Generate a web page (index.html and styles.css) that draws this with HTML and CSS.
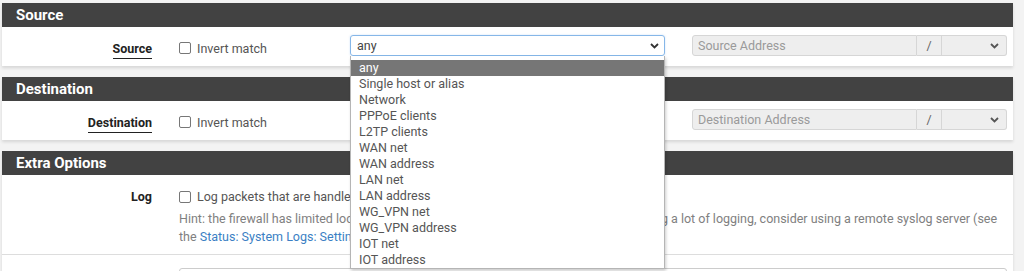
FILE: index.html
```html
<!DOCTYPE html>
<html lang="en">
<head>
    <meta charset="UTF-8">
    <title>Edit Firewall Rule</title>
    <link rel="stylesheet" href="styles.css">
</head>
<body>
    <div class="main">
        <div class="panel">
            <div class="panelHead">Source</div>
            <div class="panelBody">
                <div class="row">
                    <span class="label"><span class="required">Source</span></span>
                    <label class="check"><span class="box"></span>Invert match</label>
                    <div class="selectWrap">
                        <div class="select focus">
                            <span>any</span>
                            <svg class="chev" width="9" height="6" viewBox="0 0 9 6"><path d="M1 1 L4.5 4.5 L8 1" fill="none" stroke="#333" stroke-width="1.8"/></svg>
                        </div>
                        <ul class="dropList">
                            <li class="active">any</li>
                            <li>Single host or alias</li>
                            <li>Network</li>
                            <li>PPPoE clients</li>
                            <li>L2TP clients</li>
                            <li>WAN net</li>
                            <li>WAN address</li>
                            <li>LAN net</li>
                            <li>LAN address</li>
                            <li>WG_VPN net</li>
                            <li>WG_VPN address</li>
                            <li>IOT net</li>
                            <li>IOT address</li>
                        </ul>
                    </div>
                    <div class="addrGroup">
                        <span class="addr">Source Address</span>
                        <span class="slash">/</span>
                        <span class="mask">
                            <svg class="chev" width="9" height="6" viewBox="0 0 9 6"><path d="M1 1 L4.5 4.5 L8 1" fill="none" stroke="#555" stroke-width="1.8"/></svg>
                        </span>
                    </div>
                </div>
            </div>
        </div>

        <div class="panel">
            <div class="panelHead">Destination</div>
            <div class="panelBody">
                <div class="row">
                    <span class="label"><span class="required">Destination</span></span>
                    <label class="check"><span class="box"></span>Invert match</label>
                    <div class="selectWrap">
                        <div class="select">
                            <span>any</span>
                            <svg class="chev" width="9" height="6" viewBox="0 0 9 6"><path d="M1 1 L4.5 4.5 L8 1" fill="none" stroke="#333" stroke-width="1.8"/></svg>
                        </div>
                    </div>
                    <div class="addrGroup">
                        <span class="addr">Destination Address</span>
                        <span class="slash">/</span>
                        <span class="mask">
                            <svg class="chev" width="9" height="6" viewBox="0 0 9 6"><path d="M1 1 L4.5 4.5 L8 1" fill="none" stroke="#555" stroke-width="1.8"/></svg>
                        </span>
                    </div>
                </div>
            </div>
        </div>

        <div class="panel">
            <div class="panelHead">Extra Options</div>
            <div class="panelBody">
                <div class="row logRow">
                    <span class="label">Log</span>
                    <div class="wide">
                        <label class="check"><span class="box"></span>Log packets that are handled by this rule</label>
                        <p class="hint">Hint: the firewall has limited local log space. Don't turn on logging for everything. If doing a lot of logging, consider using a remote syslog server (see the <a href="javascript:;">Status: System Logs: Settings</a> page).</p>
                    </div>
                </div>
                <div class="row descRow">
                    <span class="label">Description</span>
                    <div class="wide">
                        <span class="input"></span>
                    </div>
                </div>
            </div>
        </div>
    </div>
</body>
</html>
```

FILE: styles.css
```css
*{
    margin: 0;
    padding: 0;
    box-sizing: border-box;
}
ul{
    list-style: none;
}
a{
    text-decoration: none;
    color: #3b7fc4;
}
body{
    background: #f3f3f3;
    font-family: Roboto, "Liberation Sans", sans-serif;
    font-size: 12.5px;
    color: #333;
}
.main{
    width: 1011px;
    margin-left: 2px;
    padding-top: 3px;
}
.panel{
    margin-bottom: 11px;
    background: #fff;
    box-shadow: 0 2px 3px rgba(0,0,0,.12);
}
.panelHead{
    height: 24px;
    line-height: 24px;
    padding-left: 14px;
    background: #424242;
    color: #fff;
    font-size: 15px;
    font-weight: bold;
}
.row{
    display: grid;
    grid-template-columns: 150px 144px 315px 315px;
    column-gap: 27px;
    align-items: center;
    padding: 8px 0 10px;
}
.label{
    text-align: right;
    font-weight: bold;
    color: #222;
    padding-top: 6px;
}
.required{
    border-bottom: 1px solid #222;
    padding-bottom: 2px;
}
.check{
    display: flex;
    align-items: center;
    color: #555;
    padding-top: 5px;
}
.box{
    width: 12px;
    height: 12px;
    border: 1px solid #777;
    border-radius: 2px;
    margin-right: 6px;
    background: #fff;
}
.selectWrap{
    position: relative;
}
.select{
    height: 21px;
    border: 1px solid #ccc;
    border-radius: 3px;
    display: flex;
    align-items: center;
    justify-content: space-between;
    padding: 0 5px 0 6px;
    color: #444;
}
.select.focus{
    border-color: #86b7e8;
    box-shadow: 0 0 2px rgba(102,160,230,.35);
}
.dropList{
    position: absolute;
    left: 0;
    top: 21px;
    width: 315px;
    padding-top: 4px;
    background: #fff;
    border: 1px solid #b5b5b5;
    border-top: none;
    box-shadow: 1px 2px 3px rgba(0,0,0,.2);
    z-index: 5;
}
.dropList li{
    height: 16px;
    line-height: 16px;
    padding-left: 8px;
    color: #555;
}
.dropList li.active{
    background: #767676;
    color: #fff;
}
.addrGroup{
    display: flex;
    height: 21px;
}
.addrGroup span{
    background: #eeeeee;
    border: 1px solid #d6d6d6;
    display: flex;
    align-items: center;
}
.addr{
    width: 225px;
    border-radius: 3px 0 0 3px;
    padding-left: 5px;
    color: #9a9a9a;
}
.slash{
    width: 25px;
    justify-content: center;
    border-left: none !important;
    color: #666;
}
.mask{
    flex: 1;
    border-left: none !important;
    border-radius: 0 3px 3px 0;
    justify-content: flex-end;
    padding-right: 7px;
}
.logRow{
    align-items: start;
    padding: 13px 0 8px;
    border-bottom: 1px solid #ddd;
}
.logRow .label{
    line-height: 18px;
    padding-top: 0;
}
.wide{
    grid-column: 2 / 5;
}
.logRow .check{
    line-height: 18px;
    padding-top: 0;
}
.hint{
    margin-top: 4px;
    line-height: 18px;
    color: #808080;
    width: 828px;
}
.descRow{
    padding: 13px 0 10px;
}
.input{
    display: block;
    height: 21px;
    border: 1px solid #ccc;
    border-radius: 3px;
}
```
